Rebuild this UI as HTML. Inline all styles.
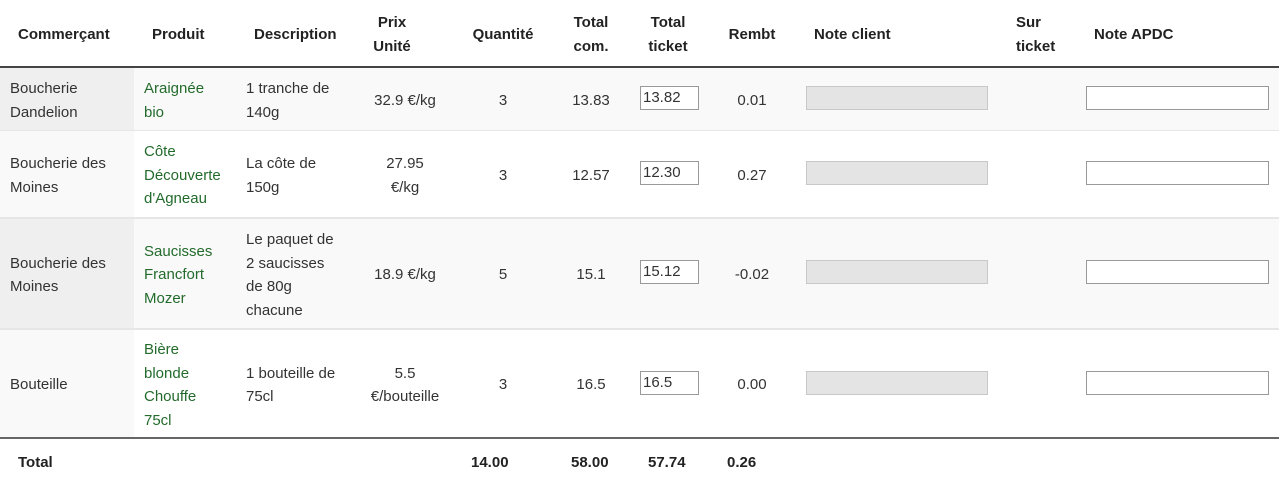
<!DOCTYPE html>
<html><head><meta charset="utf-8"><style>
*{margin:0;padding:0;box-sizing:border-box}
body{width:1279px;height:479px;background:#fff;font-family:"Liberation Sans",sans-serif;font-size:15px;color:#333;position:relative;overflow:hidden}
.c{position:absolute;display:flex;align-items:center;line-height:23.5px;padding-top:3px}
.ctr{justify-content:center;text-align:center}
.h{font-weight:bold;color:#222}
.g{color:#236b2c}
.bg{position:absolute}
.in{position:absolute;height:24px;border:1px solid #999;background:#fff;font-size:15px;padding-left:2px;line-height:22px;color:#333;font-family:"Liberation Sans",sans-serif}
.dis{position:absolute;height:24px;border:1px solid #c8c8c8;background:#e4e4e4}
.hl{position:absolute;left:0;width:1279px}
</style></head><body>
<div class="bg" style="left:0;top:68px;width:1279px;height:62px;background:#f9f9f9"></div>
<div class="bg" style="left:0;top:68px;width:134px;height:62px;background:#efefef"></div>
<div class="bg" style="left:0;top:131px;width:134px;height:86px;background:#f9f9f9"></div>
<div class="bg" style="left:0;top:219px;width:1279px;height:109px;background:#f9f9f9"></div>
<div class="bg" style="left:0;top:219px;width:134px;height:109px;background:#efefef"></div>
<div class="bg" style="left:0;top:330px;width:134px;height:107px;background:#f9f9f9"></div>
<div class="hl" style="top:66px;height:2px;background:#444"></div>
<div class="hl" style="top:130px;height:1px;background:#e6e6e6"></div>
<div class="hl" style="top:217px;height:2px;background:#e6e6e6"></div>
<div class="hl" style="top:328px;height:2px;background:#e6e6e6"></div>
<div class="hl" style="top:437px;height:2px;background:#666"></div>

<div class="c h" style="left:18px;top:0;height:66px">Commerçant</div>
<div class="c h" style="left:152px;top:0;height:66px">Produit</div>
<div class="c h" style="left:254px;top:0;height:66px">Description</div>
<div class="c h ctr" style="left:357px;width:70px;top:0;height:66px">Prix<br>Unité</div>
<div class="c h ctr" style="left:463px;width:80px;top:0;height:66px">Quantité</div>
<div class="c h ctr" style="left:560px;width:62px;top:0;height:66px">Total<br>com.</div>
<div class="c h ctr" style="left:637px;width:62px;top:0;height:66px">Total<br>ticket</div>
<div class="c h ctr" style="left:720px;width:64px;top:0;height:66px">Rembt</div>
<div class="c h" style="left:814px;top:0;height:66px">Note client</div>
<div class="c h" style="left:1016px;top:0;height:66px">Sur<br>ticket</div>
<div class="c h" style="left:1094px;top:0;height:66px">Note APDC</div>

<div class="c" style="left:10px;top:75px;height:48px">Boucherie<br>Dandelion</div>
<div class="c g" style="left:144px;top:75px;height:48px">Araignée<br>bio</div>
<div class="c" style="left:246px;top:75px;height:48px">1 tranche de<br>140g</div>
<div class="c ctr" style="left:355px;width:100px;top:75px;height:48px">32.9 €/kg</div>
<div class="c ctr" style="left:473px;width:60px;top:75px;height:48px">3</div>
<div class="c ctr" style="left:560px;width:62px;top:75px;height:48px">13.83</div>
<div class="in" style="left:640px;top:86px;width:59px">13.82</div>
<div class="c ctr" style="left:720px;width:64px;top:75px;height:48px">0.01</div>
<div class="dis" style="left:806px;top:86px;width:182px"></div>
<div class="in" style="left:1086px;top:86px;width:183px"></div>

<div class="c" style="left:10px;top:131px;height:86px">Boucherie des<br>Moines</div>
<div class="c g" style="left:144px;top:131px;height:86px">Côte<br>Découverte<br>d'Agneau</div>
<div class="c" style="left:246px;top:131px;height:86px">La côte de<br>150g</div>
<div class="c ctr" style="left:355px;width:100px;top:131px;height:86px">27.95<br>€/kg</div>
<div class="c ctr" style="left:473px;width:60px;top:131px;height:86px">3</div>
<div class="c ctr" style="left:560px;width:62px;top:131px;height:86px">12.57</div>
<div class="in" style="left:640px;top:161px;width:59px">12.30</div>
<div class="c ctr" style="left:720px;width:64px;top:131px;height:86px">0.27</div>
<div class="dis" style="left:806px;top:161px;width:182px"></div>
<div class="in" style="left:1086px;top:161px;width:183px"></div>

<div class="c" style="left:10px;top:219px;height:109px">Boucherie des<br>Moines</div>
<div class="c g" style="left:144px;top:219px;height:109px">Saucisses<br>Francfort<br>Mozer</div>
<div class="c" style="left:246px;top:219px;height:109px">Le paquet de<br>2 saucisses<br>de 80g<br>chacune</div>
<div class="c ctr" style="left:355px;width:100px;top:219px;height:109px">18.9 €/kg</div>
<div class="c ctr" style="left:473px;width:60px;top:219px;height:109px">5</div>
<div class="c ctr" style="left:560px;width:62px;top:219px;height:109px">15.1</div>
<div class="in" style="left:640px;top:260px;width:59px">15.12</div>
<div class="c ctr" style="left:720px;width:64px;top:219px;height:109px">-0.02</div>
<div class="dis" style="left:806px;top:260px;width:182px"></div>
<div class="in" style="left:1086px;top:260px;width:183px"></div>

<div class="c" style="left:10px;top:330px;height:107px">Bouteille</div>
<div class="c g" style="left:144px;top:330px;height:107px">Bière<br>blonde<br>Chouffe<br>75cl</div>
<div class="c" style="left:246px;top:330px;height:107px">1 bouteille de<br>75cl</div>
<div class="c ctr" style="left:355px;width:100px;top:330px;height:107px">5.5<br>€/bouteille</div>
<div class="c ctr" style="left:473px;width:60px;top:330px;height:107px">3</div>
<div class="c ctr" style="left:560px;width:62px;top:330px;height:107px">16.5</div>
<div class="in" style="left:640px;top:371px;width:59px">16.5</div>
<div class="c ctr" style="left:720px;width:64px;top:330px;height:107px">0.00</div>
<div class="dis" style="left:806px;top:371px;width:182px"></div>
<div class="in" style="left:1086px;top:371px;width:183px"></div>

<div class="c h" style="left:18px;top:443px;height:36px">Total</div>
<div class="c h" style="left:471px;top:443px;height:36px">14.00</div>
<div class="c h" style="left:571px;top:443px;height:36px">58.00</div>
<div class="c h" style="left:648px;top:443px;height:36px">57.74</div>
<div class="c h" style="left:727px;top:443px;height:36px">0.26</div>
</body></html>
